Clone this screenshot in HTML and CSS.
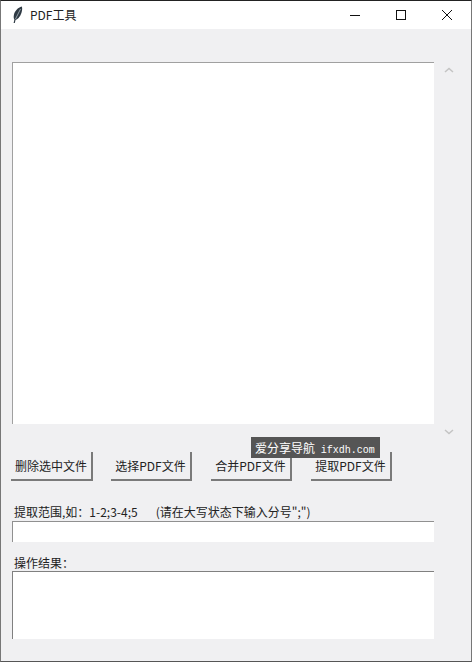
FILE: index.html
```html
<!DOCTYPE html>
<html lang="zh-CN">
  <head>
    <title>PDF工具</title>
    <meta charset="UTF-8">
    <link rel="stylesheet" href="styles.css">
  </head>
  <body>
    <div class="window">
      <div class="titlebar">
        <svg class="feather" width="12" height="18" viewBox="0 0 12 18">
          <path d="M9.800 0.500C6 1.500 2.500 5 1.800 9.500C1.500 11.500 1.800 12.800 2.400 13.500L1.600 17L2.800 17L3.600 13.800C6.500 13 9 9.500 9.800 5.500C10.300 3.500 10.300 1.800 9.800 0.500Z" fill="#2f3a44"/>
          <path d="M8.500 3L3.500 13" stroke="#aebbc4" stroke-width="0.800" fill="none"/>
        </svg>
        <span class="title">PDF工具</span>
        <div class="controls">
          <svg class="control" width="46" height="28" viewBox="0 0 46 28"><path d="M18 14.500H28" stroke="#111" fill="none"/></svg>
          <svg class="control" width="46" height="28" viewBox="0 0 46 28"><rect x="18.500" y="9.500" width="9" height="9" stroke="#111" fill="none"/></svg>
          <svg class="control" width="46" height="28" viewBox="0 0 46 28"><path d="M18 9L28 19M28 9L18 19" stroke="#111" fill="none"/></svg>
        </div>
      </div>

      <div class="content">
        <div class="list-row">
          <div class="listbox"></div>
          <div class="scrollbar">
            <svg width="10" height="6" viewBox="0 0 10 6"><path d="M1 5L5 1.500L9 5" stroke="#c4c4c4" stroke-width="1.500" fill="none"/></svg>
            <svg width="10" height="6" viewBox="0 0 10 6"><path d="M1 1L5 4.500L9 1" stroke="#c4c4c4" stroke-width="1.500" fill="none"/></svg>
          </div>
        </div>

        <div class="buttons">
          <button class="btn">删除选中文件</button>
          <button class="btn">选择PDF文件</button>
          <button class="btn">合并PDF文件</button>
          <button class="btn">提取PDF文件</button>
        </div>

        <div class="label range-label"><span>提取范围,如：1-2;3-4;5</span><span class="hint">(请在大写状态下输入分号";")</span></div>
        <div class="field"></div>

        <div class="label result-label">操作结果：</div>
        <div class="result"></div>
      </div>

      <div class="watermark">爱分享导航 <span class="site">ifxdh.com</span></div>
    </div>
  </body>
</html>
```

FILE: styles.css
```css
html, body {
  margin: 0;
  padding: 0;
}

body {
  font-family: "Noto Sans CJK SC", "Liberation Sans", sans-serif;
  font-size: 12px;
  color: #222;
}

.window {
  position: relative;
  box-sizing: border-box;
  width: 472px;
  height: 662px;
  background: #f0f0f2;
  border: 1px solid #555;
  border-top-color: #222;
  border-left-color: #777;
  border-right-color: #777;
  overflow: hidden;
}

.titlebar {
  display: flex;
  align-items: center;
  height: 28px;
  background: white;
  padding-left: 11px;
}

.title {
  margin-left: 6px;
  margin-bottom: 2px;
  font-size: 12px;
  color: #222;
}

.controls {
  display: flex;
  margin-left: auto;
  margin-right: 1px;
}

.control {
  display: block;
}

.content {
  padding: 33px 0 0 11px;
}

.list-row {
  display: flex;
}

.listbox {
  box-sizing: border-box;
  width: 422px;
  height: 362px;
  background: white;
  border-top: 1px solid #a0a0a0;
  border-left: 1px solid #a0a0a0;
}

.scrollbar {
  display: flex;
  flex-direction: column;
  justify-content: space-between;
  align-items: center;
  width: 30px;
  height: 373px;
  padding-top: 5px;
  box-sizing: border-box;
  margin-bottom: -11px;
}

.buttons {
  display: flex;
  gap: 19px;
  margin-top: 28px;
  margin-left: -1px;
}

.btn {
  box-sizing: border-box;
  width: 81px;
  height: 29px;
  padding: 0;
  background: #f0f0f2;
  border: none;
  border-right: 2px solid #7a7a7a;
  border-bottom: 2px solid #7a7a7a;
  font-family: inherit;
  font-size: 12px;
  color: #222;
}

.btn:first-child {
  width: 82px;
  margin-right: -1px;
}

.label {
  padding-left: 2px;
  font-size: 12px;
  line-height: 16px;
}

.range-label {
  display: flex;
  margin-top: 23px;
  margin-bottom: 1px;
}

.hint {
  margin-left: 18px;
}

.field {
  box-sizing: border-box;
  width: 422px;
  height: 21px;
  background: white;
  border-top: 1px solid #909090;
  border-left: 1px solid #909090;
}

.result-label {
  margin-top: 13px;
}

.result {
  box-sizing: border-box;
  width: 422px;
  height: 68px;
  background: white;
  border-top: 1px solid #808080;
  border-left: 1px solid #808080;
}

.watermark {
  position: absolute;
  left: 250px;
  top: 436px;
  width: 129px;
  height: 21px;
  background: #555;
  color: white;
  font-size: 12px;
  line-height: 21px;
  padding-left: 4px;
  box-sizing: border-box;
  white-space: nowrap;
}

.site {
  font-family: "Liberation Mono", monospace;
  font-size: 10px;
  margin-left: 3px;
}
```
